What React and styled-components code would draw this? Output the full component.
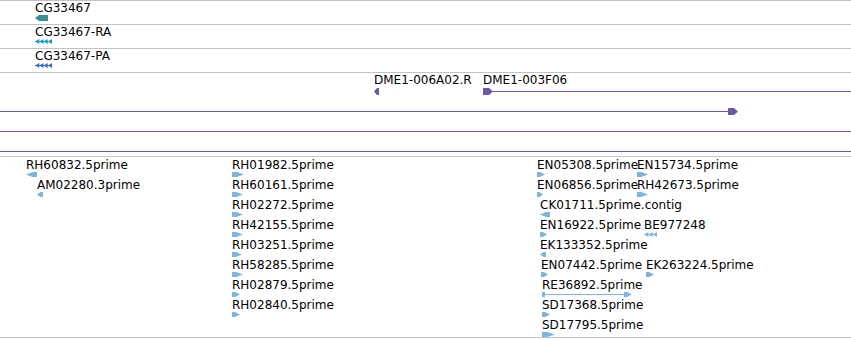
import styled, { createGlobalStyle } from 'styled-components';

const GlobalStyle = createGlobalStyle`
  html, body {
    margin: 0;
    padding: 0;
    background: #fff;
  }
  body {
    overflow: hidden;
  }
`;

const PAGE_W = 851;

const Panel = styled.div`
  width: ${PAGE_W}px;
  display: flex;
  flex-direction: column;
  font-family: "DejaVu Sans", "Liberation Sans", sans-serif;
`;

const Track = styled.section`
  position: relative;
  height: ${p => p.$h}px;
  border-top: 1px solid #c2c2c2;
  &:last-child {
    border-bottom: 1px solid #c2c2c2;
  }
`;

const Feature = styled.div`
  position: absolute;
  left: ${p => p.$x}px;
  top: ${p => p.$top}px;
  display: flex;
  flex-direction: column;
  align-items: flex-start;
`;

const Label = styled.span`
  display: block;
  height: 14px;
  font-size: 12px;
  line-height: 14px;
  color: #000;
  white-space: nowrap;
`;

const GlyphSvg = styled.svg`
  display: block;
  margin-top: ${p => p.$gap || 0}px;
`;

// pentagon arrow pointing right, k = length of the point
const arrowPts = (x0, w, h, k) =>
  `${x0},0 ${x0 + w - k},0 ${x0 + w},${h / 2} ${x0 + w - k},${h} ${x0},${h}`;

const Glyph = ({ kind = 'arrow', dir = 'right', w, h = 5, color, gap }) => {
  let shape;
  const mid = Math.floor(h / 2);

  if (kind === 'arrow') {
    shape = <polygon points={arrowPts(0, w, h, Math.max(3, w * 0.6))} fill={color} />;
  } else if (kind === 'gene') {
    shape = <polygon points={arrowPts(0, w, h, 4)} fill={color} />;
  } else if (kind === 'chevrons') {
    const n = Math.round(w / 4.25);
    const s = w / n;
    shape = (
      <>
        <rect x={0} y={mid} width={w} height={1} fill={color} />
        {Array.from({ length: n }).map((_, i) => (
          <polygon
            key={i}
            points={`${i * s},0 ${i * s + s},${h / 2} ${i * s},${h}`}
            fill={color}
          />
        ))}
      </>
    );
  } else if (kind === 'headline') {
    // arrow head at start, then a long line
    shape = (
      <>
        <polygon points={arrowPts(0, 10, h, 4)} fill={color} />
        <rect x={10} y={mid} width={w - 10} height={1} fill={color} />
      </>
    );
  } else if (kind === 'linehead') {
    // long line, arrow head at the end
    shape = (
      <>
        <rect x={0} y={mid} width={w - 10} height={1} fill={color} />
        <polygon points={arrowPts(w - 10, 10, h, 4)} fill={color} />
      </>
    );
  } else if (kind === 'boxline') {
    shape = (
      <>
        <rect x={0} y={0} width={3} height={h} fill={color} />
        <rect x={3} y={mid} width={w - 10} height={1} fill={color} />
        <polygon points={arrowPts(w - 8, 8, h, 5)} fill={color} />
      </>
    );
  } else {
    shape = <rect x={0} y={mid} width={w} height={1} fill={color} />;
  }

  return (
    <GlyphSvg $gap={gap} width={w} height={h} viewBox={`0 0 ${w} ${h}`}>
      <g transform={dir === 'left' ? `translate(${w},0) scale(-1,1)` : undefined}>
        {shape}
      </g>
    </GlyphSvg>
  );
};

const PURPLE = '#6c57a8';
const EST_BLUE = '#7fb5dd';

const geneTracks = [
  { label: 'CG33467', kind: 'gene', w: 13, h: 6, color: '#3c8d94' },
  { label: 'CG33467-RA', kind: 'chevrons', w: 17, h: 5, color: '#1e9ec3' },
  { label: 'CG33467-PA', kind: 'chevrons', w: 17, h: 5, color: '#3d6ec6' },
];

const dmeFeatures = [
  { x: 374, row: 0, label: 'DME1-006A02.R', kind: 'arrow', dir: 'left', w: 5 },
  { x: 483, row: 0, label: 'DME1-003F06', kind: 'headline', w: PAGE_W - 483 },
  { x: 0, row: 1, label: '', kind: 'linehead', w: 738 },
  { x: 0, row: 2, label: '', kind: 'line', w: PAGE_W },
  { x: 0, row: 3, label: '', kind: 'line', w: PAGE_W },
];

const ests = [
  [26, 0, 'RH60832.5prime', 'left', 11],
  [37, 1, 'AM02280.3prime', 'left', 6],
  [232, 0, 'RH01982.5prime', 'right', 12],
  [232, 1, 'RH60161.5prime', 'right', 11],
  [232, 2, 'RH02272.5prime', 'right', 11],
  [232, 3, 'RH42155.5prime', 'right', 11],
  [232, 4, 'RH03251.5prime', 'right', 10],
  [232, 5, 'RH58285.5prime', 'right', 11],
  [232, 6, 'RH02879.5prime', 'right', 8],
  [232, 7, 'RH02840.5prime', 'right', 8],
  [537, 0, 'EN05308.5prime', 'right', 8],
  [637, 0, 'EN15734.5prime', 'right', 11],
  [537, 1, 'EN06856.5prime', 'right', 6],
  [637, 1, 'RH42673.5prime', 'right', 11],
  [540, 2, 'CK01711.5prime.contig', 'left', 10],
  [540, 3, 'EN16922.5prime', 'right', 7],
  [644, 3, 'BE977248', 'left', 13, 'chevrons'],
  [540, 4, 'EK133352.5prime', 'left', 6],
  [541, 5, 'EN07442.5prime', 'right', 7],
  [646, 5, 'EK263224.5prime', 'right', 8],
  [542, 6, 'RE36892.5prime', 'right', 90, 'boxline'],
  [542, 7, 'SD17368.5prime', 'right', 8],
  [542, 8, 'SD17795.5prime', 'right', 13],
];

export default function App() {
  return (
    <>
      <GlobalStyle />
      <Panel>
        {geneTracks.map(t => (
          <Track key={t.label} $h={23}>
            <Feature $x={35} $top={0}>
              <Label>{t.label}</Label>
              <Glyph kind={t.kind} dir="left" w={t.w} h={t.h} color={t.color} />
            </Feature>
          </Track>
        ))}

        <Track $h={83}>
          {dmeFeatures.map((f, i) => (
            <Feature key={i} $x={f.x} $top={f.row * 20}>
              <Label>{f.label}</Label>
              <Glyph kind={f.kind} dir={f.dir} w={f.w} h={7} gap={1} color={PURPLE} />
            </Feature>
          ))}
        </Track>

        <Track $h={180}>
          {ests.map(([x, row, label, dir, w, kind]) => (
            <Feature key={label} $x={x} $top={1 + row * 20}>
              <Label>{label}</Label>
              <Glyph kind={kind || 'arrow'} dir={dir} w={w} h={5} color={EST_BLUE} />
            </Feature>
          ))}
        </Track>
      </Panel>
    </>
  );
}
